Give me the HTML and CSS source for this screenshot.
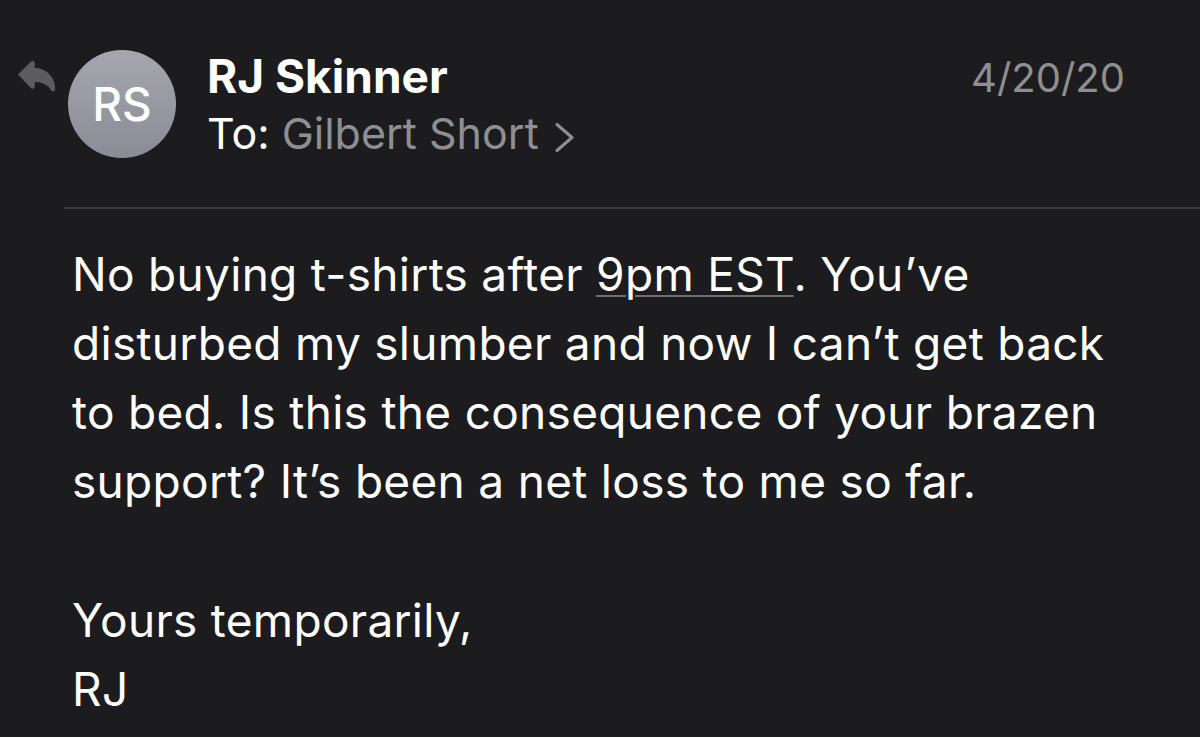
FILE: index.html
```html
<!DOCTYPE html>
<html>
<head>
<meta charset="utf-8">
<link rel="stylesheet" href="styles.css">
</head>
<body>
<div class="mail">
  <header class="head">
    <svg class="reply" viewBox="0 0 37 32" width="37" height="32">
      <path d="M1 14.5 L13.5 2 Q15.5 0.5 16 3 V8.5 C28 9 36 17 36.5 29 Q36 32 34 30 C30 23.5 24 21 16 21 V26.5 Q15.5 29 13.5 27.5 Z" fill="#5c5c60" stroke="#5c5c60" stroke-width="1.5" stroke-linejoin="round"/>
    </svg>
    <div class="avatar">RS</div>
    <div class="who">
      <div class="name">RJ Skinner</div>
      <div class="to">To: <span class="rcpt">Gilbert Short</span><svg class="chev" viewBox="0 0 19 29" width="19" height="29"><path d="M2 1.5 L17 14.5 L2 27.5" fill="none" stroke="#8e8e93" stroke-width="3" stroke-linecap="round" stroke-linejoin="round"/></svg></div>
    </div>
    <div class="date">4/20/20</div>
  </header>
  <div class="sep"></div>
  <div class="body">
    <p>No buying t-shirts after <span class="link">9pm EST</span>. You’ve disturbed my slumber and now I can’t get back to bed. Is this the consequence of your brazen support? It’s been a net loss to me so far.</p>
    <p class="sign">Yours temporarily,<br>RJ</p>
  </div>
</div>
</body>
</html>
```

FILE: styles.css
```css
html, body {
  margin: 0;
  padding: 0;
  background: #1c1c1e;
}
body {
  width: 1200px;
  height: 737px;
  overflow: hidden;
  font-family: Inter, "Liberation Sans", sans-serif;
  color: #ffffff;
}
.head {
  display: flex;
  align-items: flex-start;
  padding: 50px 75px 0 18px;
}
.reply {
  margin-top: 10px;
  flex: none;
}
.avatar {
  flex: none;
  width: 108px;
  height: 108px;
  margin-left: 13px;
  border-radius: 50%;
  background: linear-gradient(#a4a7ae, #898c94);
  color: #fff;
  font-size: 46px;
  font-weight: 500;
  display: flex;
  align-items: center;
  justify-content: center;
}
.who {
  margin-left: 31px;
  flex: 1;
}
.name {
  font-size: 46px;
  font-weight: 700;
  line-height: 52px;
}
.to {
  font-size: 43px;
  line-height: 52px;
  margin-top: 5px;
}
.rcpt {
  color: #8e8e93;
}
.chev {
  margin-left: 16px;
  vertical-align: -3px;
}
.date {
  font-size: 40px;
  line-height: 52px;
  margin-top: 2px;
  color: #8e8e93;
}
.sep {
  margin: 48px 0 0 64px;
  height: 1.5px;
  background: #3a3a3c;
}
.body {
  padding: 31px 60px 0 72px;
  font-size: 46px;
  letter-spacing: 0.3px;
  line-height: 69.3px;
}
.body p {
  margin: 0;
}
.body .sign {
  margin-top: 69.3px;
}
.link {
  text-decoration: underline;
  text-decoration-color: #6e6e73;
  text-decoration-thickness: 2px;
  text-underline-offset: 4px;
}
```
